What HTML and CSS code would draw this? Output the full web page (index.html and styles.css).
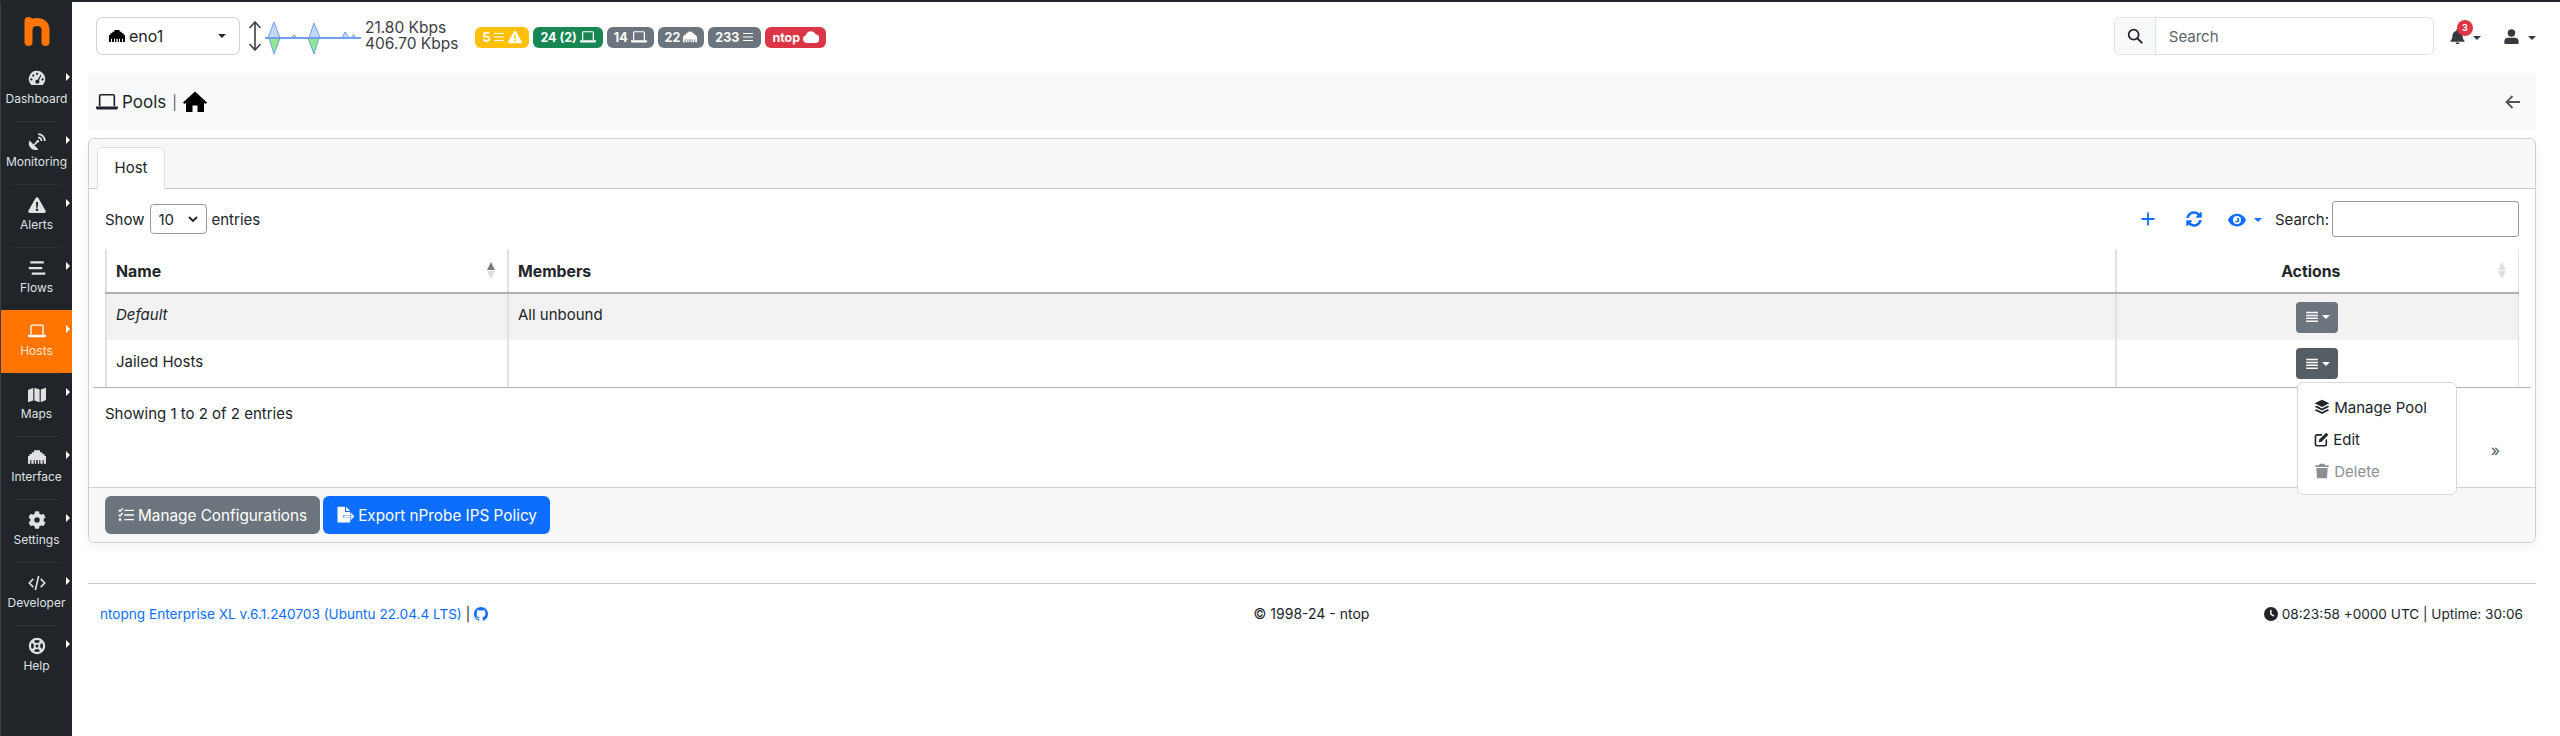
FILE: index.html
```html
<!DOCTYPE html>
<html lang="en">
<head>
    <meta charset="UTF-8">
    <meta name="viewport" content="width=device-width, initial-scale=1.0">
    <title>Pools</title>
    <link rel="stylesheet" href="styles.css">
</head>
<body>
    <svg class="sprite" xmlns="http://www.w3.org/2000/svg">
        <symbol id="i-gauge" viewBox="0 0 24 24"><path fill="currentColor" fill-rule="evenodd" d="M12 1a11 11 0 0 1 11 11c0 3.2-1.3 6-3.5 8h-15A11 11 0 0 1 12 1zm0 2.5a1.5 1.5 0 1 0 0 3 1.5 1.5 0 0 0 0-3zm-5 2.4a1.5 1.5 0 1 0 0 3 1.5 1.5 0 0 0 0-3zM4.5 11a1.5 1.5 0 1 0 0 3 1.5 1.5 0 0 0 0-3zm15 0a1.5 1.5 0 1 0 0 3 1.5 1.5 0 0 0 0-3zm-2.7-4.6L13 13a2.6 2.6 0 1 0 1.6 1.1l3.2-7.2a.7.7 0 0 0-1-.5z"/></symbol>
        <symbol id="i-dish" viewBox="0 0 24 24"><path fill="currentColor" d="M2 10 14 22c-3.5 1.5-7.5.8-10.400-2.100S.5 13.500 2 10z"/><path stroke="currentColor" stroke-width="2.200" d="m8 16 4.500-4.500"/><circle cx="13" cy="11" r="1.800" fill="currentColor"/><path fill="none" stroke="currentColor" stroke-width="2.400" d="M13.500 6a4.500 4.500 0 0 1 4.500 4.500M13.500 1.500a9 9 0 0 1 9 9"/></symbol>
        <symbol id="i-warn" viewBox="0 0 24 24"><path fill="currentColor" fill-rule="evenodd" d="M12 1.500c.8 0 1.400.4 1.800 1l9.700 17c.7 1.300-.2 3-1.800 3H2.300c-1.600 0-2.500-1.700-1.800-3l9.700-17c.4-.6 1-1 1.800-1zM10.600 8l.4 7.500h2l.4-7.500zM12 16.500a1.700 1.700 0 1 0 0 3.400 1.700 1.700 0 0 0 0-3.400z"/></symbol>
        <symbol id="i-stream" viewBox="0 0 24 24"><path fill="currentColor" d="M3 3h18v3H3zM1 10.500h18v3H1zM5 18h18v3H5z"/></symbol>
        <symbol id="i-laptop" viewBox="0 0 24 24"><path fill="none" stroke="currentColor" stroke-width="1.800" d="M4 16.500V5.500c0-.8.600-1.400 1.400-1.400h13.200c.8 0 1.400.6 1.400 1.400v11"/><path fill="currentColor" d="M0 17h24v1.300c0 1.200-.9 2-2 2H2c-1.100 0-2-.8-2-2z"/></symbol>
        <symbol id="i-map" viewBox="0 0 24 24"><path fill="currentColor" d="M0 6.500 7 3.500v17l-7 2.500zM8.500 3.500l7 2.500v17l-7-2.500zM17 6l7-2.500V20l-7 3z"/></symbol>
        <symbol id="i-eth" viewBox="0 0 24 24"><path fill="currentColor" d="M8 3h8v2.500h3V8h3v2.500h2V21h-3v-5h-1.500v5h-3v-5H15v5h-2v-5h-2v5H9v-5H7.500v5h-3v-5H3v5H0V10.500h2V8h3V5.500h3z"/></symbol>
        <symbol id="i-cog" viewBox="0 0 512 512"><path fill="currentColor" d="M487.4 315.7l-42.6-24.6c4.3-23.2 4.3-47 0-70.2l42.6-24.6c4.900-2.800 7.100-8.600 5.500-14-11.100-35.600-30-67.800-54.700-94.600-3.800-4.100-10-5.100-14.800-2.300L380.800 110c-17.900-15.400-38.500-27.300-60.800-35.100V25.800c0-5.600-3.900-10.500-9.400-11.700-36.700-8.200-74.300-7.800-109.200 0-5.500 1.200-9.400 6.100-9.400 11.700V75c-22.200 7.900-42.800 19.800-60.800 35.100L88.700 85.500c-4.900-2.800-11-1.900-14.800 2.300-24.700 26.700-43.600 58.900-54.700 94.600-1.700 5.400.6 11.200 5.500 14L67.300 221c-4.300 23.200-4.300 47 0 70.200l-42.600 24.600c-4.900 2.800-7.100 8.600-5.500 14 11.100 35.600 30 67.800 54.700 94.600 3.800 4.100 10 5.100 14.800 2.300l42.600-24.600c17.900 15.400 38.500 27.300 60.800 35.100v49.200c0 5.600 3.900 10.500 9.400 11.700 36.700 8.200 74.300 7.800 109.200 0 5.500-1.200 9.400-6.100 9.400-11.700v-49.200c22.200-7.900 42.800-19.800 60.800-35.100l42.600 24.600c4.900 2.800 11 1.900 14.800-2.300 24.700-26.700 43.600-58.900 54.700-94.600 1.500-5.500-.7-11.300-5.600-14.100zM256 336c-44.100 0-80-35.900-80-80s35.900-80 80-80 80 35.900 80 80-35.900 80-80 80z"/></symbol>
        <symbol id="i-code" viewBox="0 0 24 24"><path fill="none" stroke="currentColor" stroke-width="2.200" d="M7 6.500 1.800 12 7 17.500M17 6.500l5.200 5.500-5.200 5.500M14.200 2.500 9.800 21.500"/></symbol>
        <symbol id="i-help" viewBox="0 0 24 24"><circle cx="12" cy="12" r="9.500" fill="none" stroke="currentColor" stroke-width="3"/><circle cx="12" cy="12" r="3.200" fill="none" stroke="currentColor" stroke-width="2.400"/><path stroke="currentColor" stroke-width="3.400" d="m5 5 4 4M19 5l-4 4M5 19l4-4M19 19l-4-4"/></symbol>
        <symbol id="i-home" viewBox="0 0 24 24"><path fill="currentColor" d="M12 1.500 24 12.500l-1.500 1.600L21 12.800V22h-6.500v-6.500h-5V22H3v-9.200l-1.500 1.300L0 12.500z"/></symbol>
        <symbol id="i-list" viewBox="0 0 24 24"><path fill="currentColor" d="M2 3h20v2.500H2zM2 8h20v2.500H2zM2 13h20v2.500H2zM2 18h20v2.500H2z"/></symbol>
        <symbol id="i-lines" viewBox="0 0 24 24"><path fill="currentColor" d="M2 4h20v2H2zM2 11h20v2H2zM2 18h20v2H2z"/></symbol>
        <symbol id="i-cloud" viewBox="0 0 24 24"><path fill="currentColor" d="M6 21a6 6 0 0 1-1.500-11.800A7.500 7.500 0 0 1 18.800 8 6.500 6.500 0 0 1 18 21z"/></symbol>
        <symbol id="i-eye" viewBox="0 0 24 24"><path fill="currentColor" fill-rule="evenodd" d="M12 3.500c6 0 10.500 4.200 12 8.500-1.500 4.300-6 8.500-12 8.500S1.500 16.300 0 12c1.500-4.300 6-8.500 12-8.500zm0 3a5.500 5.500 0 1 0 0 11 5.500 5.500 0 0 0 0-11zm0 2.300a3.200 3.200 0 1 1-3 4.400 2.300 2.300 0 0 0 2.400-4.300z"/></symbol>
        <symbol id="i-sync" viewBox="0 0 512 512"><path fill="currentColor" d="M370.72 133.28C339.458 104.008 298.888 87.962 255.848 88c-77.458.068-144.328 53.178-162.791 126.85-1.344 5.363-6.122 9.15-11.651 9.15H24.103c-7.498 0-13.194-6.807-11.807-14.176C33.933 94.924 134.813 8 256 8c66.448 0 126.791 26.136 171.315 68.685L463.03 40.97C478.149 25.851 504 36.559 504 57.941V192c0 13.255-10.745 24-24 24H345.941c-21.382 0-32.09-25.851-16.971-40.971l41.75-41.749zM32 296h134.059c21.382 0 32.09 25.851 16.971 40.971l-41.75 41.75c31.262 29.273 71.835 45.319 114.876 45.28 77.418-.07 144.315-53.144 162.787-126.849 1.344-5.363 6.122-9.15 11.651-9.15h57.304c7.498 0 13.194 6.807 11.807 14.176C478.067 417.076 377.187 504 256 504c-66.448 0-126.791-26.136-171.315-68.685L48.97 471.03C33.851 486.149 8 475.441 8 454.059V320c0-13.255 10.745-24 24-24z"/></symbol>
        <symbol id="i-layers" viewBox="0 0 24 24"><path fill="currentColor" d="M12 1 23 6.500 12 12 1 6.500zM4 10.300l8 4 8-4 3 1.500-11 5.500L1 11.800zM4 15.500l8 4 8-4 3 1.500-11 5.500L1 17z"/></symbol>
        <symbol id="i-edit" viewBox="0 0 24 24"><path fill="none" stroke="currentColor" stroke-width="2.600" stroke-linecap="round" d="M12 4.500H5A2.700 2.700 0 0 0 2.300 7.200v12A2.700 2.700 0 0 0 5 21.900h12a2.700 2.700 0 0 0 2.700-2.700V13"/><path fill="currentColor" d="M19.500 1 23 4.500 12 15.500l-4.500 1 1-4.500z"/></symbol>
        <symbol id="i-trash" viewBox="0 0 24 24"><path fill="currentColor" d="M8.500 1h7l1 2.500H22V6H2V3.500h5.500zM3.500 7.500h17L19.500 23h-15z"/></symbol>
        <symbol id="i-tasks" viewBox="0 0 24 24"><path fill="none" stroke="currentColor" stroke-width="2" d="M9.500 5H24M9.500 12H24M9.500 19H24M1 4.500l2 2L7 2M1 11.500l2 2 4-4.500"/><circle cx="3" cy="19" r="2" fill="currentColor"/></symbol>
        <symbol id="i-export" viewBox="0 0 24 24"><path fill="currentColor" d="M2 1h10v7h7v4.500H9.500v2.500H19v7H2zM13.500 1 19 6.500h-5.500z"/><path fill="none" stroke="currentColor" stroke-width="1.800" d="M11 13.800h12M19.500 10l3.800 3.800-3.800 3.800"/></symbol>
        <symbol id="i-github" viewBox="0 0 16 16"><path fill="currentColor" d="M8 0C3.580 0 0 3.580 0 8c0 3.540 2.290 6.530 5.470 7.590.4.070.55-.17.55-.38 0-.19-.01-.82-.01-1.490-2.010.37-2.530-.49-2.690-.94-.09-.23-.48-.94-.82-1.130-.28-.15-.68-.52-.01-.53.63-.01 1.080.58 1.230.82.72 1.210 1.870.87 2.330.66.07-.52.28-.87.51-1.070-1.780-.2-3.640-.89-3.640-3.950 0-.87.31-1.590.82-2.150-.08-.2-.36-1.020.08-2.120 0 0 .67-.21 2.200.82.64-.18 1.320-.27 2-.27.68 0 1.360.09 2 .27 1.530-1.040 2.200-.82 2.200-.82.44 1.100.16 1.920.08 2.120.51.56.82 1.270.82 2.150 0 3.070-1.870 3.750-3.650 3.950.29.25.54.73.54 1.480 0 1.070-.01 1.930-.01 2.200 0 .21.15.46.55.38A8.013 8.013 0 0 0 16 8c0-4.420-3.580-8-8-8z"/></symbol>
        <symbol id="i-clock" viewBox="0 0 24 24"><path fill="currentColor" fill-rule="evenodd" d="M12 0a12 12 0 1 1 0 24 12 12 0 0 1 0-24zm-1.500 5v8l6 3.500 1.200-2-4.700-2.800V5z"/></symbol>
        <symbol id="i-search" viewBox="0 0 24 24"><circle cx="10" cy="10" r="7.500" fill="none" stroke="currentColor" stroke-width="2.600"/><path stroke="currentColor" stroke-width="3" stroke-linecap="round" d="m16 16 6 6"/></symbol>
        <symbol id="i-bell" viewBox="0 0 24 24"><path fill="currentColor" d="M12 0c1 0 1.600.7 1.600 1.600v1C17.500 3.400 20 6.500 20 10c0 5 1.500 6.800 3 8.300.7.800.2 2-1 2H2c-1.200 0-1.700-1.200-1-2C2.500 16.800 4 15 4 10c0-3.500 2.500-6.600 6.400-7.400v-1C10.400.7 11 0 12 0zM9 21.500h6a3 3 0 0 1-6 0z"/></symbol>
        <symbol id="i-user" viewBox="0 0 24 24"><circle cx="12" cy="6.500" r="6" fill="currentColor"/><path fill="currentColor" d="M7 14h10a6.500 6.500 0 0 1 6.500 6.500V22a2 2 0 0 1-2 2h-19a2 2 0 0 1-2-2v-1.500A6.500 6.500 0 0 1 7 14z"/></symbol>
    </svg>

    <div class="sidebar">
        <div class="logo">
            <svg width="26" height="30" viewBox="0 0 26 30"><path fill="none" stroke="#ff7500" stroke-width="8" stroke-linecap="round" d="M4.500 4v21M4.500 13c0-5 3-8 8.500-8s8.500 3 8.500 8v12"/></svg>
        </div>
        <a class="side-item"><svg class="side-icon"><use href="#i-gauge"/></svg>Dashboard</a>
        <a class="side-item"><svg class="side-icon"><use href="#i-dish"/></svg>Monitoring</a>
        <a class="side-item"><svg class="side-icon"><use href="#i-warn"/></svg>Alerts</a>
        <a class="side-item"><svg class="side-icon"><use href="#i-stream"/></svg>Flows</a>
        <a class="side-item active"><svg class="side-icon"><use href="#i-laptop"/></svg>Hosts</a>
        <a class="side-item"><svg class="side-icon"><use href="#i-map"/></svg>Maps</a>
        <a class="side-item"><svg class="side-icon"><use href="#i-eth"/></svg>Interface</a>
        <a class="side-item"><svg class="side-icon"><use href="#i-cog"/></svg>Settings</a>
        <a class="side-item"><svg class="side-icon"><use href="#i-code"/></svg>Developer</a>
        <a class="side-item"><svg class="side-icon"><use href="#i-help"/></svg>Help</a>
    </div>

    <div class="main">
        <div class="topbar">
            <div class="iface-select">
                <svg class="icon-16 eth"><use href="#i-eth"/></svg>
                <span>eno1</span>
                <span class="caret iface-caret"></span>
            </div>
            <svg class="updown" width="14" height="30" viewBox="0 0 14 30"><path fill="none" stroke="#3d4048" stroke-width="1.600" d="M7 1v28M1.500 7 7 1l5.500 6M1.500 23 7 29l5.500-6"/></svg>
            <svg class="spark" width="96" height="34" viewBox="0 0 96 34">
                <path fill="#c6d8f7" stroke="#6ea0ee" d="M3 17 9 1l6 16h11l3-3 3 3h12l5-15 6 15h22l3-6 2.500 3.500 1.500 2.500h2l2.500-3.500 2.500 3.500h5z"/>
                <path fill="#90e890" stroke="#6ea0ee" d="M4 17h11L9 33zM43 17h11L49 33z"/>
                <path fill="none" stroke="#6ea0ee" stroke-width="2" d="M0 17h96"/>
            </svg>
            <div class="rates">21.80 Kbps<br>406.70 Kbps</div>
            <div class="badges">
                <span class="badge yellow">5 <svg class="icon-12"><use href="#i-lines"/></svg> <svg class="icon-14"><use href="#i-warn"/></svg></span>
                <span class="badge green">24 (2) <svg class="icon-16"><use href="#i-laptop"/></svg></span>
                <span class="badge grey">14 <svg class="icon-16"><use href="#i-laptop"/></svg></span>
                <span class="badge grey">22 <svg class="icon-14"><use href="#i-eth"/></svg></span>
                <span class="badge grey">233 <svg class="icon-12"><use href="#i-lines"/></svg></span>
                <span class="badge red">ntop <svg class="icon-16"><use href="#i-cloud"/></svg></span>
            </div>
            <div class="top-right">
                <div class="search-group">
                    <span class="search-addon"><svg class="icon-16"><use href="#i-search"/></svg></span>
                    <span class="search-text">Search</span>
                </div>
                <div class="notif">
                    <svg class="icon-15"><use href="#i-bell"/></svg>
                    <span class="notif-count">3</span>
                    <span class="caret"></span>
                </div>
                <div class="user">
                    <svg class="icon-15"><use href="#i-user"/></svg>
                    <span class="caret"></span>
                </div>
            </div>
        </div>

        <div class="crumbs">
            <svg class="icon-22"><use href="#i-laptop"/></svg>
            <span class="crumb-text">Pools</span>
            <span class="crumb-sep">|</span>
            <svg class="crumb-home"><use href="#i-home"/></svg>
            <svg class="crumb-back" width="16" height="14" viewBox="0 0 16 14"><path fill="none" stroke="#555" stroke-width="1.800" d="M15 7H2M7.500 1 1.500 7l6 6"/></svg>
        </div>

        <div class="card">
            <div class="card-head">
                <span class="tab">Host</span>
            </div>
            <div class="card-body">
                <div class="tools">
                    <div class="length">Show <span class="fake-select">10<svg width="10" height="6" viewBox="0 0 10 6"><path fill="none" stroke="#222" stroke-width="1.800" d="m1 1 4 4 4-4"/></svg></span> entries</div>
                    <div class="actions-bar">
                        <svg class="tool-icon plus" viewBox="0 0 14 14"><path stroke="currentColor" stroke-width="1.800" d="M7 .5v13M.5 7h13"/></svg>
                        <svg class="tool-icon sync"><use href="#i-sync"/></svg>
                        <span class="eye-wrap"><svg class="tool-icon eye"><use href="#i-eye"/></svg><span class="caret"></span></span>
                        <label class="search-label">Search:<span class="search-box"></span></label>
                    </div>
                </div>
                <table class="pools">
                    <thead>
                        <tr>
                            <th class="col-name">Name<span class="sorter up"></span></th>
                            <th class="col-members">Members</th>
                            <th class="col-actions">Actions<span class="sorter"></span></th>
                        </tr>
                    </thead>
                    <tbody>
                        <tr class="odd">
                            <td class="cell-text"><i>Default</i></td>
                            <td class="cell-text">All unbound</td>
                            <td class="cell-btn"><span class="row-btn"><svg class="icon-14"><use href="#i-list"/></svg><span class="caret"></span></span></td>
                        </tr>
                        <tr>
                            <td class="cell-text">Jailed Hosts</td>
                            <td></td>
                            <td class="cell-btn"><span class="row-btn open"><svg class="icon-14"><use href="#i-list"/></svg><span class="caret"></span></span></td>
                        </tr>
                    </tbody>
                </table>
                <div class="info-row">
                    <span>Showing 1 to 2 of 2 entries</span>
                    <span class="next">»</span>
                </div>
                <div class="menu">
                    <a class="menu-item"><svg class="icon-16"><use href="#i-layers"/></svg> Manage Pool</a>
                    <a class="menu-item"><svg class="icon-15"><use href="#i-edit"/></svg> Edit</a>
                    <a class="menu-item disabled"><svg class="icon-16"><use href="#i-trash"/></svg> Delete</a>
                </div>
            </div>
            <div class="card-foot">
                <a class="btn btn-grey"><svg class="icon-16"><use href="#i-tasks"/></svg> Manage Configurations</a>
                <a class="btn btn-blue"><svg class="icon-18"><use href="#i-export"/></svg> Export nProbe IPS Policy</a>
            </div>
        </div>

        <div class="footer">
            <div class="foot-left"><a>ntopng Enterprise XL v.6.1.240703 (Ubuntu 22.04.4 LTS)</a> | <svg class="icon-14 gh"><use href="#i-github"/></svg></div>
            <div class="foot-mid">© 1998-24 - ntop</div>
            <div class="foot-right"><svg class="icon-14"><use href="#i-clock"/></svg> 08:23:58 +0000 UTC | Uptime: 30:06</div>
        </div>
    </div>
</body>
</html>
```

FILE: styles.css
```css
* {
    box-sizing: border-box;
}

html, body {
    height: 736px;
    overflow: hidden;
}

body {
    margin: 0;
    display: flex;
    font-family: Inter, "Liberation Sans", sans-serif;
    font-size: 15px;
    color: #212529;
    background-color: #fff;
    border-top: 2px solid #212529;
}

.sprite {
    display: none;
}

svg {
    vertical-align: -2px;
}

.icon-12 { width: 12px; height: 12px; }
.icon-14 { width: 14px; height: 14px; }
.icon-15 { width: 15px; height: 15px; }
.icon-16 { width: 16px; height: 16px; }
.icon-18 { width: 18px; height: 18px; }
.icon-22 { width: 22px; height: 22px; }

.caret {
    display: inline-block;
    border-top: 4.5px solid currentColor;
    border-left: 4.5px solid transparent;
    border-right: 4.5px solid transparent;
    vertical-align: 2px;
}

/* sidebar */
.sidebar {
    width: 72px;
    flex-shrink: 0;
    background-color: #212529;
    border-left: 1px solid #3a3f45;
    margin-top: -2px;
    height: 736px;
    color: #dfe1e3;
}

.logo {
    height: 58px;
    display: flex;
    align-items: center;
    justify-content: center;
    padding-top: 5px;
}

.side-item {
    position: relative;
    display: flex;
    flex-direction: column;
    align-items: center;
    gap: 3px;
    height: 63px;
    padding-top: 12px;
    font-size: 12px;
    line-height: 15px;
}

.side-item + .side-item::before {
    content: "";
    position: absolute;
    top: 0;
    left: 12px;
    right: 12px;
    border-top: 1px solid #2d3238;
}

.side-item::after {
    content: "";
    position: absolute;
    top: 15px;
    right: 2px;
    border-left: 4px solid #fff;
    border-top: 4px solid transparent;
    border-bottom: 4px solid transparent;
}

.side-item.active {
    background-color: #ff7500;
    color: #fde6d2;
}

.side-item.active::before {
    display: none;
}

.side-icon {
    width: 18px;
    height: 18px;
    color: #dfe1e3;
}

.active .side-icon {
    color: #fff;
}

/* main column */
.main {
    flex: 1;
    min-width: 0;
    padding: 0 24px 0 16px;
}

.topbar {
    height: 72px;
    display: flex;
    align-items: center;
    padding-left: 8px;
    padding-bottom: 4px;
}

.iface-select {
    width: 144px;
    height: 38px;
    display: flex;
    align-items: center;
    gap: 4px;
    padding: 0 12px;
    border: 1px solid #ced4da;
    border-radius: 6px;
    font-size: 16px;
}

.eth {
    color: #000;
}

.iface-caret {
    margin-left: auto;
    margin-right: 1px;
}

.updown {
    margin-left: 8px;
    margin-right: 3px;
}

.spark {
    margin-top: 4px;
}

.rates {
    margin-left: 4px;
    font-size: 15.500px;
    line-height: 16px;
    color: #3d4048;
}

.badges {
    display: flex;
    gap: 4px;
    margin-left: 17px;
    padding-top: 2px;
}

.badge {
    height: 21px;
    display: inline-flex;
    align-items: center;
    gap: 3px;
    padding: 0 7px;
    border-radius: 6px;
    font-size: 12.500px;
    font-weight: 700;
    color: #fff;
    white-space: nowrap;
}

.yellow { background-color: #ffc107; }
.green { background-color: #198754; }
.grey { background-color: #6c757d; }
.red { background-color: #dc3545; }

.top-right {
    margin-left: auto;
    display: flex;
    align-items: center;
}

.search-group {
    width: 320px;
    height: 38px;
    display: flex;
    border: 1px solid #dee2e6;
    border-radius: 6px;
}

.search-addon {
    width: 41px;
    display: flex;
    align-items: center;
    justify-content: center;
    background-color: #f8f9fa;
    border-right: 1px solid #dee2e6;
    border-radius: 6px 0 0 6px;
}

.search-text {
    padding: 0 13px;
    line-height: 37px;
    color: #5c636a;
}

.notif {
    position: relative;
    margin-left: 16px;
    width: 38px;
    color: #343a40;
}

.notif-count {
    position: absolute;
    left: 7px;
    top: -7px;
    width: 16px;
    height: 16px;
    border-radius: 50%;
    background-color: #dc3545;
    color: #fff;
    font-size: 9px;
    font-weight: 700;
    line-height: 16px;
    text-align: center;
}

.notif .caret {
    margin-left: 4px;
}

.user {
    margin-left: 16px;
    color: #343a40;
}

.user .caret {
    margin-left: 5px;
}

.crumbs {
    height: 56px;
    display: flex;
    align-items: center;
    gap: 5px;
    padding: 0 15px 0 8px;
    background-color: #f8f9fa;
    border-radius: 4px;
    font-size: 17px;
}

.crumb-text {
    margin-left: -1px;
}

.crumb-sep {
    margin: 0 1px;
    font-size: 14px;
    color: #555;
}

.crumb-home {
    width: 24px;
    height: 24px;
    color: #000;
}

.crumb-back {
    margin-left: auto;
}

/* card */
.card {
    margin-top: 8px;
    border: 1px solid #d0d0d0;
    border-radius: 6px;
    box-shadow: 0 4px 12px rgba(0, 0, 0, 0.05);
}

.card-head {
    height: 50px;
    padding: 8px 8px 0;
    background-color: #f7f7f7;
    border-bottom: 1px solid #c8c8c8;
    border-radius: 6px 6px 0 0;
}

.tab {
    display: block;
    width: 68px;
    height: 42px;
    line-height: 40px;
    text-align: center;
    background-color: #fff;
    border: 1px solid #dee2e6;
    border-bottom: 0;
    border-radius: 5px 5px 0 0;
}

.card-body {
    position: relative;
    height: 298px;
    padding: 0 4px;
}

.tools {
    height: 60px;
    display: flex;
    align-items: center;
    justify-content: space-between;
    padding: 0 12px 0 12px;
}

.length {
    display: flex;
    align-items: center;
    gap: 5px;
    font-size: 15px;
}

.fake-select {
    width: 57px;
    height: 30px;
    display: flex;
    align-items: center;
    justify-content: space-between;
    padding: 0 8px;
    border: 1px solid #999;
    border-radius: 4px;
    font-size: 15px;
}

.actions-bar {
    display: flex;
    align-items: center;
    color: #0d6efd;
}

.tool-icon {
    vertical-align: middle;
}

.plus {
    width: 14px;
    height: 14px;
    margin-right: 31px;
}

.sync {
    width: 16px;
    height: 16px;
    margin-right: 26px;
}

.eye {
    width: 18px;
    height: 18px;
    margin-right: 8px;
}

.search-label {
    display: flex;
    align-items: center;
    gap: 3px;
    margin-left: 13px;
    color: #212529;
    font-size: 15px;
}

.search-box {
    width: 187px;
    height: 36px;
    border: 1px solid #999;
    border-radius: 3px;
}

.pools {
    width: calc(100% - 24px);
    margin: 0 12px;
    border-collapse: collapse;
    table-layout: fixed;
    font-size: 15px;
}

.pools th {
    position: relative;
    height: 44px;
    padding: 2px 9px 0;
    text-align: left;
    font-size: 15.800px;
    font-weight: 700;
    border-bottom: 2px solid #b0b0b0;
}

.pools td {
    height: 47px;
    padding: 0 9px;
}

.pools .cell-text {
    padding-bottom: 5px;
}

.pools th, .pools td {
    border-left: 2px solid #dee2e6;
}

.pools th:last-child, .pools td:last-child {
    border-right: 1px solid #dee2e6;
}

.col-name { width: 402px; }

.pools .col-actions {
    width: 403px;
    text-align: center;
    padding-right: 22px;
}

.odd td {
    background-color: #f2f2f2;
}

.cell-btn {
    text-align: center;
}

.sorter {
    position: absolute;
    right: 12px;
    top: 13px;
    width: 0;
    height: 0;
    border-left: 4px solid transparent;
    border-right: 4px solid transparent;
    border-bottom: 8px solid #dcdfe2;
}

.sorter::after {
    content: "";
    position: absolute;
    left: -4px;
    top: 9px;
    border-left: 4px solid transparent;
    border-right: 4px solid transparent;
    border-top: 8px solid #dcdfe2;
}

.sorter.up {
    border-bottom-color: #7a7a7a;
}

.row-btn {
    display: inline-flex;
    align-items: center;
    justify-content: center;
    gap: 3px;
    width: 42px;
    height: 31px;
    border-radius: 4px;
    background-color: #6c757d;
    color: #fff;
}

.row-btn.open {
    background-color: #565e64;
}

.row-btn .caret {
    border-top-width: 4px;
    border-left-width: 4px;
    border-right-width: 4px;
    vertical-align: 0;
}

.info-row {
    height: 95px;
    display: flex;
    justify-content: space-between;
    padding: 16px 31px 0 12px;
    border-top: 1px solid #b0b0b0;
    font-size: 15px;
}

.next {
    margin-top: 36px;
    font-size: 16px;
    color: #555;
}

.menu {
    position: absolute;
    left: 2208px;
    top: 193px;
    width: 160px;
    height: 113px;
    padding: 9px 0;
    background-color: #fff;
    border: 1px solid #d8d8d8;
    border-radius: 6px;
    z-index: 2;
}

.menu-item {
    display: block;
    height: 32px;
    line-height: 32px;
    padding-left: 16px;
    font-size: 15px;
    white-space: nowrap;
}

.menu-item.disabled {
    color: #8c8f92;
}

.card-foot {
    height: 55px;
    display: flex;
    align-items: center;
    gap: 3px;
    padding: 0 16px;
    background-color: #f7f7f7;
    border-top: 1px solid #d0d0d0;
    border-radius: 0 0 6px 6px;
}

.btn {
    height: 38px;
    display: inline-flex;
    align-items: center;
    gap: 4px;
    padding: 0 13px;
    border-radius: 6px;
    color: #fff;
    font-size: 15.300px;
    white-space: nowrap;
}

.btn-grey { background-color: #6c757d; }
.btn-blue { background-color: #0d6efd; }

.footer {
    margin-top: 40px;
    height: 60px;
    display: grid;
    grid-template-columns: 1fr auto 1fr;
    align-items: center;
    padding: 0 13px 0 12px;
    border-top: 1px solid #ccc;
    font-size: 13.600px;
}

.foot-mid {
    font-size: 14px;
}

.foot-left a, .gh {
    color: #0d6efd;
}

.foot-right {
    text-align: right;
}
```
